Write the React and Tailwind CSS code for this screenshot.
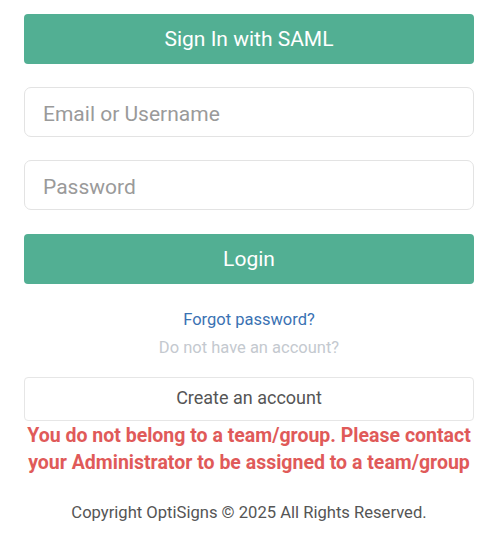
import React, { useState } from 'react';

const App = () => {
    const [login, setLogin] = useState('');
    const [password, setPassword] = useState('');

    return (
        <div className="min-h-screen bg-white pl-6 pt-[14px] font-['Roboto',sans-serif]">
            <div className="flex w-[450px] flex-col">
                {/* SAML */}
                <button className="h-[50px] w-full rounded-[4px] bg-[#52af93] pt-[1px] text-[21px] text-white">
                    Sign In with SAML
                </button>

                {/* Inputs */}
                <input
                    type="text"
                    placeholder="Email or Username"
                    value={login}
                    onChange={(e) => setLogin(e.target.value)}
                    className="mt-[23px] h-[50px] w-full rounded-[7px] border border-[#e3e3e3] px-[18px] pt-[3px] text-[21px] text-[#333] placeholder:text-[#9a9a9a] outline-none"
                />
                <input
                    type="password"
                    placeholder="Password"
                    value={password}
                    onChange={(e) => setPassword(e.target.value)}
                    className="mt-[23px] h-[50px] w-full rounded-[7px] border border-[#e3e3e3] px-[18px] pt-[3px] text-[21px] text-[#333] placeholder:text-[#9a9a9a] outline-none"
                />

                <button className="mt-[24px] h-[50px] w-full rounded-[4px] bg-[#52af93] pt-[1px] text-[21px] text-white">
                    Login
                </button>

                {/* Links */}
                <a href="#" className="mt-[26px] text-center text-[16.5px] leading-[20px] text-[#3a72b3]">
                    Forgot password?
                </a>
                <p className="mt-[8px] text-center text-[16.5px] leading-[20px] text-[#c4c9cf]">
                    Do not have an account?
                </p>

                <button className="mt-[19px] h-[44px] w-full rounded-[4px] border border-[#e6e6e6] bg-white pb-[3px] text-[18px] text-[#555]">
                    Create an account
                </button>

                {/* Error */}
                <p className="mt-[1px] text-center text-[19.5px] font-bold leading-[27px] text-[#e05a59]">
                    You do not belong to a team/group. Please contact your Administrator to be assigned to a team/group
                </p>

                <p className="mt-[26px] text-center text-[16.6px] leading-[22px] text-[#555]">
                    Copyright OptiSigns © 2025 All Rights Reserved.
                </p>
            </div>
        </div>
    );
};

export default App;
